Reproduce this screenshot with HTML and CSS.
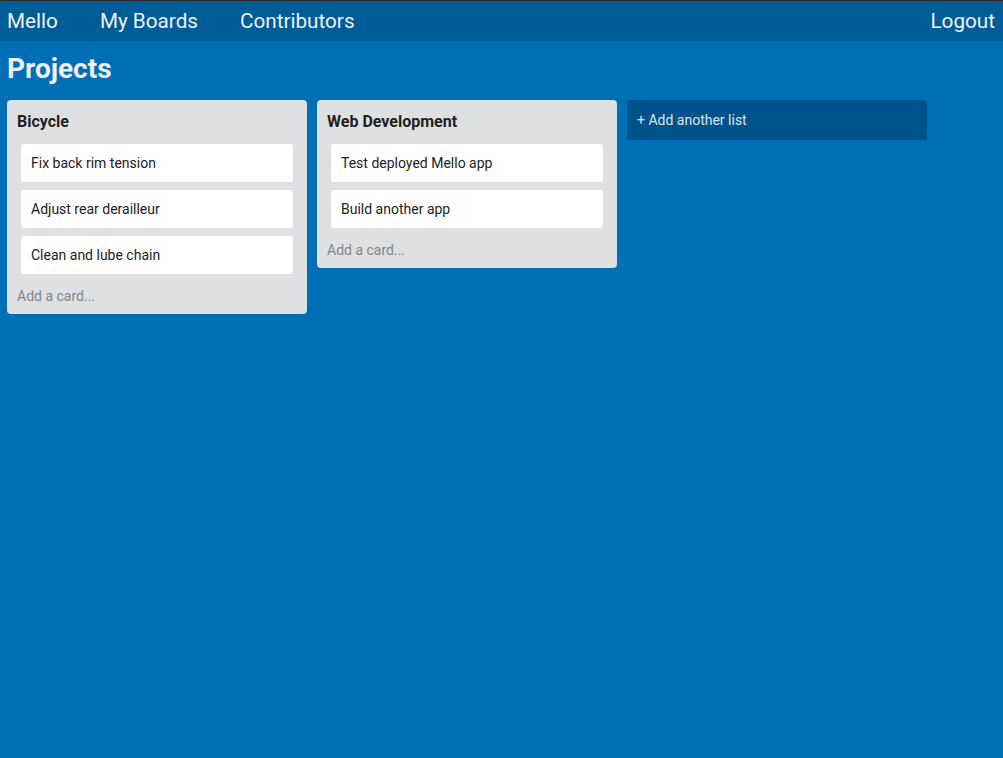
FILE: index.html
```html
<!DOCTYPE html>
<html>
<head>
<meta charset="utf-8">
<link rel="stylesheet" href="styles.css">
</head>
<body>
<nav class="nav">
  <div class="nav-left">
    <a class="nav-link">Mello</a>
    <a class="nav-link">My Boards</a>
    <a class="nav-link">Contributors</a>
  </div>
  <a class="nav-link">Logout</a>
</nav>
<h1 class="board-title">Projects</h1>
<main class="board">
  <section class="list">
    <h2 class="list-title">Bicycle</h2>
    <div class="cards">
      <div class="card">Fix back rim tension</div>
      <div class="card">Adjust rear derailleur</div>
      <div class="card">Clean and lube chain</div>
    </div>
    <div class="add-card">Add a card...</div>
  </section>
  <section class="list">
    <h2 class="list-title">Web Development</h2>
    <div class="cards">
      <div class="card">Test deployed Mello app</div>
      <div class="card">Build another app</div>
    </div>
    <div class="add-card">Add a card...</div>
  </section>
  <div class="add-list">+ Add another list</div>
</main>
</body>
</html>
```
FILE: styles.css
```css
html, body {
  margin: 0;
  padding: 0;
}
body {
  background: #006fb6;
  font-family: Roboto, "Liberation Sans", sans-serif;
  min-height: 758px;
  border-top: 1px solid #2a2a2a;
  box-sizing: border-box;
}
.nav {
  height: 40px;
  background: #005c97;
  display: flex;
  align-items: center;
  justify-content: space-between;
  padding: 0 8px 0 7px;
}
.nav-left {
  display: flex;
  gap: 42px;
}
.nav-link {
  color: #eef0f3;
  font-size: 20.7px;
  line-height: 24px;
}
.board-title {
  margin: 0;
  padding: 12px 7px 0 7px;
  height: 47px;
  box-sizing: border-box;
  font-size: 28px;
  line-height: 32px;
  font-weight: 700;
  color: #eef0f3;
}
.board {
  display: flex;
  align-items: flex-start;
  gap: 10px;
  padding: 12px 7px 0 7px;
}
.list {
  width: 300px;
  box-sizing: border-box;
  background: #dfe0e2;
  border-radius: 4px;
  padding: 12px 10px 10px 10px;
}
.list-title {
  margin: 0;
  font-size: 16px;
  line-height: 20px;
  font-weight: 700;
  color: #1f1f1f;
}
.cards {
  display: flex;
  flex-direction: column;
  gap: 8px;
  margin: 12px 4px 0 4px;
}
.card {
  height: 38px;
  background: #fff;
  border-radius: 3px;
  display: flex;
  align-items: center;
  padding: 0 10px;
  font-size: 14px;
  color: #222;
}
.add-card {
  margin-top: 14px;
  font-size: 14px;
  line-height: 16px;
  color: #858585;
}
.add-list {
  width: 300px;
  height: 40px;
  box-sizing: border-box;
  background: #00538a;
  border-radius: 4px 4px 0 0;
  display: flex;
  align-items: center;
  padding: 0 10px;
  font-size: 14px;
  color: #dfe3ea;
}
```
